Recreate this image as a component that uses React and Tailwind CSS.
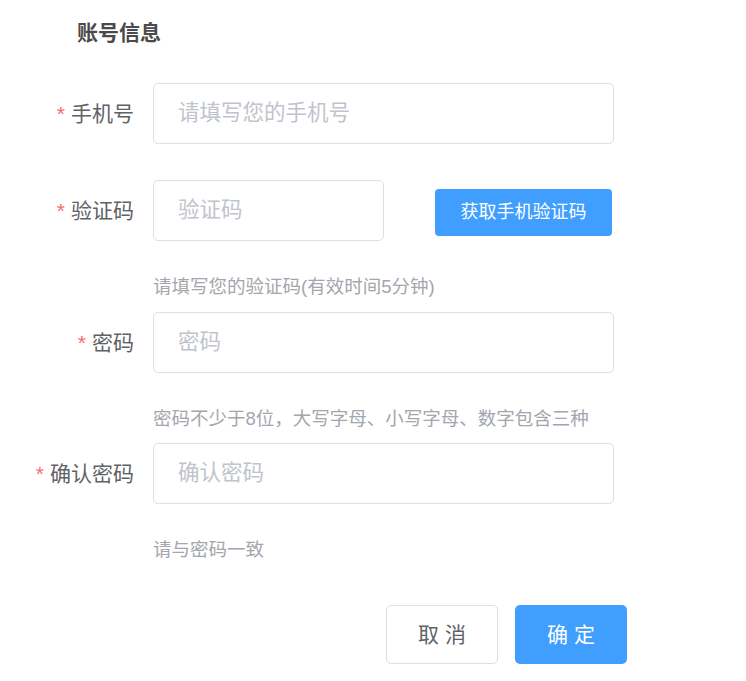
import React from 'react';

const font = { fontFamily: '"Liberation Sans", "Noto Sans CJK SC", sans-serif' };

const Label = ({ children }) => (
  <label className="w-[134px] shrink-0 text-right text-[21px] text-[#606266] mr-[19px]">
    <span className="text-[#f56c6c] mr-[6px]">*</span>
    {children}
  </label>
);

const Field = ({ placeholder, width = 'w-[461px]', type = 'text' }) => (
  <input
    type={type}
    placeholder={placeholder}
    className={`${width} h-[61px] rounded-[5px] border border-[#dcdfe6] bg-white px-[24px] text-[21.5px] text-[#606266] outline-none placeholder:text-[#c0c4cc]`}
  />
);

const Hint = ({ children, className = '' }) => (
  <p className={`ml-[153px] text-[18.5px] leading-[20px] text-[#a3a6ad] ${className}`}>{children}</p>
);

export default function App() {
  return (
    <div className="min-h-screen bg-white pt-[21px]" style={font}>
      <h2 className="pl-[77px] text-[21px] font-bold leading-[24px] text-[#4a4a4a]">账号信息</h2>

      <form className="mt-[38px]" onSubmit={(e) => e.preventDefault()}>
        <div className="flex items-center">
          <Label>手机号</Label>
          <Field placeholder="请填写您的手机号" />
        </div>

        <div className="mt-[36px] flex items-center">
          <Label>验证码</Label>
          <Field placeholder="验证码" width="w-[231px]" />
          <button
            type="button"
            className="ml-[51px] mt-[4px] h-[47px] w-[177px] rounded-[4px] bg-[#409eff] text-[18px] text-white"
          >
            获取手机验证码
          </button>
        </div>
        <Hint className="mt-[36px]">请填写您的验证码(有效时间5分钟)</Hint>

        <div className="mt-[15px] flex items-center">
          <Label>密码</Label>
          <Field placeholder="密码" type="password" />
        </div>
        <Hint className="mt-[36px]">密码不少于8位，大写字母、小写字母、数字包含三种</Hint>

        <div className="mt-[14px] flex items-center">
          <Label>确认密码</Label>
          <Field placeholder="确认密码" type="password" />
        </div>
        <Hint className="mt-[36px]">请与密码一致</Hint>

        <div className="mt-[45px] ml-[386px] flex gap-[17px]">
          <button
            type="button"
            className="h-[59px] w-[112px] rounded-[5px] border border-[#dcdfe6] bg-white text-[21px] text-[#606266]"
          >
            取 消
          </button>
          <button
            type="submit"
            className="h-[59px] w-[112px] rounded-[5px] bg-[#409eff] text-[21px] text-white"
          >
            确 定
          </button>
        </div>
      </form>
    </div>
  );
}
